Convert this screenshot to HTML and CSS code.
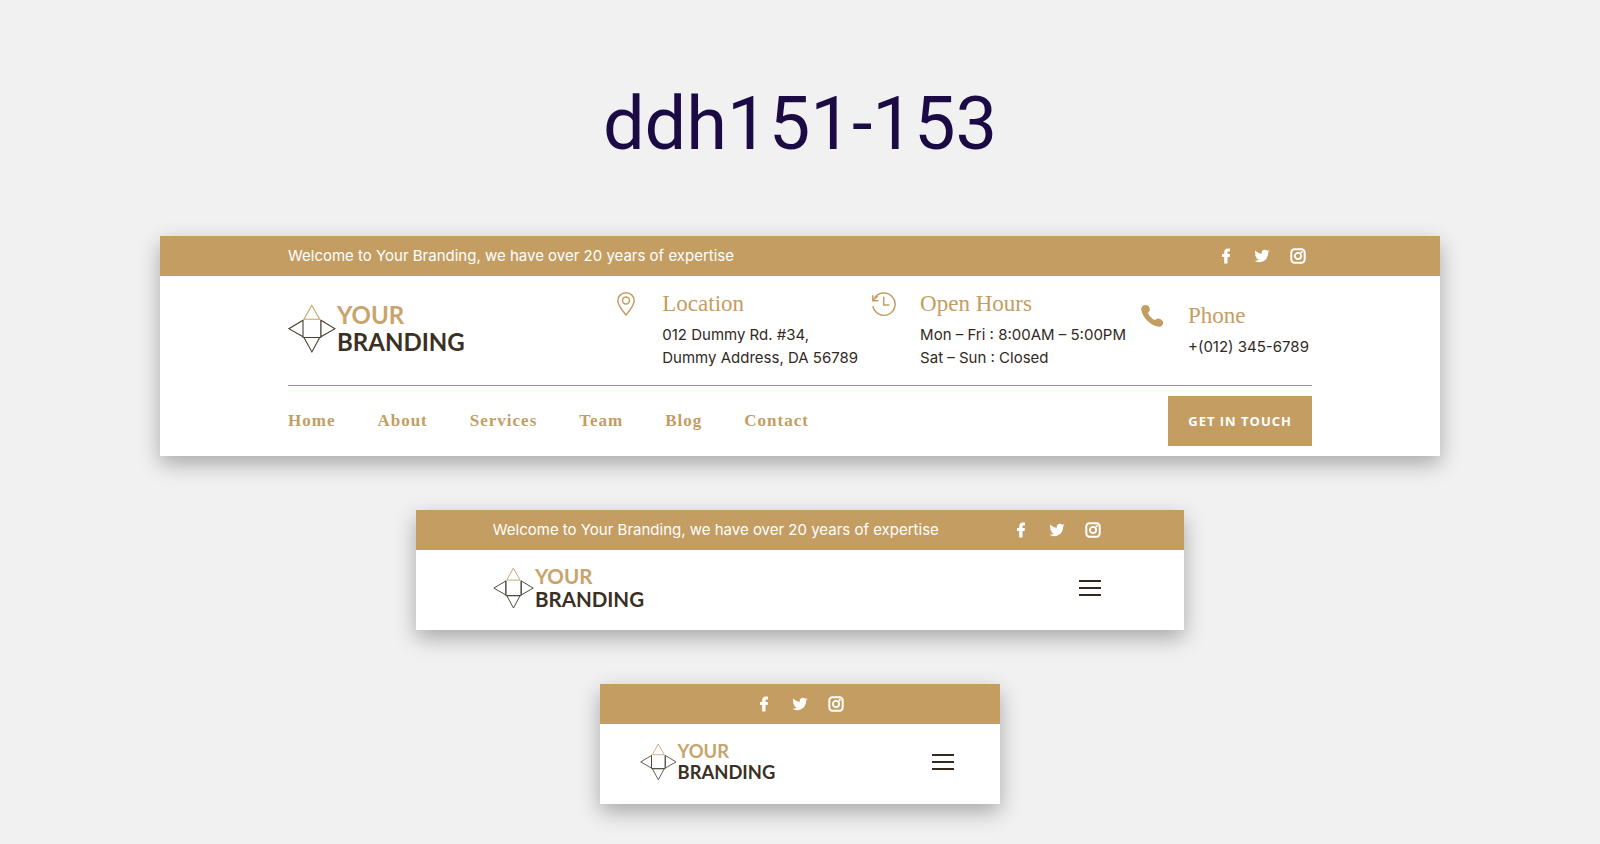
FILE: index.html
```html
<!DOCTYPE html>
<html lang="en">
<head>
<meta charset="utf-8">
<meta name="viewport" content="width=device-width, initial-scale=1">
<title>ddh151-153</title>
<link rel="stylesheet" href="styles.css">
</head>
<body>
<svg class="sprite" aria-hidden="true">
  <symbol id="facebook" viewBox="0 0 16 16"><path d="M6.200 15.500V8.900H4V6.100h2.200V4.300C6.200 2 7.500.5 9.800.5c.9 0 1.700.1 2.200.2v2.700h-1.300c-1 0-1.200.5-1.200 1.200v1.500H12l-.4 2.800H9.500v6.600z"/></symbol>
  <symbol id="twitter" viewBox="0 0 16 16"><path d="M15.600 3.200c-.6.2-1.200.4-1.800.5.7-.4 1.100-1 1.400-1.700-.6.4-1.300.6-2 .8A3.150 3.150 0 0 0 7.800 5.700C5.200 5.500 2.900 4.300 1.300 2.400c-.8 1.500-.4 3.300 1 4.200-.5 0-1-.2-1.400-.4 0 1.600 1.100 2.800 2.500 3.100-.5.1-1 .1-1.400 0 .4 1.300 1.600 2.200 2.900 2.200A6.400 6.400 0 0 1 .3 12.800c1.400.9 3.100 1.400 4.900 1.400 5.800 0 9.100-4.900 8.900-9.400.6-.4 1.100-1 1.500-1.600z"/></symbol>
  <symbol id="instagram" viewBox="0 0 16 16"><rect x="1.300" y="1.300" width="13.400" height="13.400" rx="3.200" fill="none" stroke="currentColor" stroke-width="2"/><circle cx="8" cy="8" r="3.100" fill="none" stroke="currentColor" stroke-width="1.900"/><circle cx="11.700" cy="4.200" r="1.100"/></symbol>
  <symbol id="mark" viewBox="0 0 48 50"><g fill="none" stroke-width="1.100"><path stroke="#4a4034" d="M15 16.300v16.400L.9 24.700zM33 16.300v16.400l14-8zM16 33.500h15.700l-7.800 14.400zM15 16v17.500h17.800V16"/><path stroke="#c8a46c" d="M23.800 1.300 16 15.300h15.700z"/></g></symbol>
</svg>

<main class="page">
  <h1 class="title">ddh151-153</h1>

  <header class="card card-wide">
    <div class="bar">
      <p class="welcome">Welcome to Your Branding, we have over 20 years of expertise</p>
      <nav class="social" aria-label="Social">
        <a href="#" aria-label="Facebook"><svg><use href="#facebook"/></svg></a>
        <a href="#" aria-label="Twitter"><svg><use href="#twitter"/></svg></a>
        <a href="#" aria-label="Instagram"><svg><use href="#instagram"/></svg></a>
      </nav>
    </div>
    <div class="info">
      <a class="logo" href="#"><svg viewBox="0 0 180 50"><use href="#mark" width="48" height="50"/><text class="logo-top" x="49" y="20">YOUR</text><text class="logo-bottom" x="49" y="47">BRANDING</text></svg></a>
      <div class="blurbs">
        <section class="blurb">
          <svg class="blurb-icon" viewBox="0 0 24 24"><path d="M12 .8c-4.800 0-8.200 3.500-8.200 7.900 0 4.300 4.500 9.800 8.200 14.400 3.700-4.600 8.200-10.100 8.200-14.400C20.200 4.300 16.800.8 12 .8z"/><circle cx="12" cy="8.600" r="3.500"/></svg>
          <div><h2>Location</h2><p>012 Dummy Rd. #34,<br>Dummy Address, DA 56789</p></div>
        </section>
        <section class="blurb">
          <svg class="blurb-icon" viewBox="0 0 24 24"><path d="M.9 14.200A11.200 11.200 0 1 0 2.300 6.400M.8 3.200v5.500h5.600M1 8.500l4.700-4.600M11.700 4.800v8.300h5.800"/></svg>
          <div><h2>Open Hours</h2><p>Mon – Fri : 8:00AM – 5:00PM<br>Sat – Sun : Closed</p></div>
        </section>
        <section class="blurb">
          <svg class="blurb-icon blurb-icon-solid" viewBox="0 0 24 24"><path d="M3.300 1.500C4.800.7 6.500.7 7.700 1.600c1.500 1.100 2.500 3.500 2.100 5C9.500 7.800 8 8.100 8.100 9.100c.3 2.200 4.500 6.500 6.700 6.800 1 .1 1.600-1.200 2.700-1.400 1.700-.3 4.400 1 5.300 2.700.8 1.500.2 3.300-.9 4.500-1.200 1.200-3.300 1.300-5.700.6C9.100 20.200 2.800 13.300 1.300 6.300c-.4-2 .4-3.900 2-4.800z"/></svg>
          <div class="phone"><h2>Phone</h2><p>+(012) 345-6789</p></div>
        </section>
      </div>
    </div>
    <div class="menu">
      <nav class="links" aria-label="Main">
        <a href="#">Home</a><a href="#">About</a><a href="#">Services</a><a href="#">Team</a><a href="#">Blog</a><a href="#">Contact</a>
      </nav>
      <a class="cta" href="#">GET IN TOUCH</a>
    </div>
  </header>

  <header class="card card-medium">
    <div class="bar">
      <p class="welcome">Welcome to Your Branding, we have over 20 years of expertise</p>
      <nav class="social" aria-label="Social">
        <a href="#" aria-label="Facebook"><svg><use href="#facebook"/></svg></a>
        <a href="#" aria-label="Twitter"><svg><use href="#twitter"/></svg></a>
        <a href="#" aria-label="Instagram"><svg><use href="#instagram"/></svg></a>
      </nav>
    </div>
    <div class="compact">
      <a class="logo" href="#"><svg viewBox="0 0 180 50"><use href="#mark" width="48" height="50"/><text class="logo-top" x="49" y="20">YOUR</text><text class="logo-bottom" x="49" y="47">BRANDING</text></svg></a>
      <button class="burger" type="button" aria-label="Open menu"><svg viewBox="0 0 22 16"><path d="M0 1h22M0 8h22M0 15h22"/></svg></button>
    </div>
  </header>

  <header class="card card-small">
    <div class="bar">
      <nav class="social" aria-label="Social">
        <a href="#" aria-label="Facebook"><svg><use href="#facebook"/></svg></a>
        <a href="#" aria-label="Twitter"><svg><use href="#twitter"/></svg></a>
        <a href="#" aria-label="Instagram"><svg><use href="#instagram"/></svg></a>
      </nav>
    </div>
    <div class="compact">
      <a class="logo" href="#"><svg viewBox="0 0 180 50"><use href="#mark" width="48" height="50"/><text class="logo-top" x="49" y="20">YOUR</text><text class="logo-bottom" x="49" y="47">BRANDING</text></svg></a>
      <button class="burger" type="button" aria-label="Open menu"><svg viewBox="0 0 22 16"><path d="M0 1h22M0 8h22M0 15h22"/></svg></button>
    </div>
  </header>
</main>
</body>
</html>
```

FILE: styles.css
```css
:root {
  --gold: #c49d63;
  --ink: #33291f;
  --sans: Inter, "Open Sans", sans-serif;
  --serif: "Liberation Serif", serif;
}

* {
  box-sizing: border-box;
}

body {
  margin: 0;
  background: #f1f1f1;
  color: var(--ink);
  font-family: var(--sans);
  font-size: 15px;
}

h1, h2, p {
  margin: 0;
  font-weight: 400;
}

a {
  color: inherit;
  text-decoration: none;
}

svg {
  display: block;
}

.sprite {
  display: none;
}

.page {
  display: flex;
  flex-direction: column;
  align-items: center;
  gap: 54px;
  padding: 82px 0 40px;
}

.title {
  margin-bottom: 16px;
  color: #1b0a43;
  font-family: Roboto, sans-serif;
  font-size: 74px;
  line-height: 84px;
}

.card {
  background: #fff;
  box-shadow: 0 8px 20px rgba(0, 0, 0, 0.3);
}

.card-wide {
  width: 80%;
}

.card-medium {
  width: 48%;
}

.card-small {
  width: 25%;
}

.bar {
  display: flex;
  align-items: center;
  justify-content: space-between;
  min-height: 40px;
  padding: 0 10%;
  background: var(--gold);
  color: #fff;
}

.card-small .bar {
  justify-content: center;
}

.welcome {
  line-height: 20px;
}

.social {
  display: flex;
  gap: 20px;
  padding: 0 6px;
}

.social svg {
  width: 16px;
  height: 16px;
  fill: currentColor;
}

.info {
  display: flex;
  align-items: center;
  justify-content: space-between;
  margin: 0 10%;
  padding: 16px 0;
  border-bottom: 1px solid #ae9068;
}

.info .logo {
  padding-bottom: 4px;
}

.logo svg {
  width: 180px;
  height: auto;
  overflow: visible;
}

.card-medium .logo svg {
  width: 154px;
}

.card-small .logo svg {
  width: 138px;
}

.logo text {
  font-family: Lato, sans-serif;
  font-size: 24px;
  font-weight: 700;
}

.logo-top {
  fill: #c8a46c;
}

.logo-bottom {
  fill: #3a3023;
}

.blurbs {
  display: flex;
  align-items: center;
  gap: 14px;
}

.blurb {
  display: flex;
  gap: 24px;
}

.blurb-icon {
  width: 24px;
  height: 24px;
  fill: none;
  stroke: var(--gold);
  stroke-width: 1.5;
}

.blurb-icon-solid {
  fill: var(--gold);
  stroke: none;
}

.blurb h2 {
  margin-bottom: 7px;
  color: var(--gold);
  font-family: var(--serif);
  font-size: 23px;
  line-height: 24px;
}

.blurb p {
  line-height: 23px;
}

.phone {
  min-width: 124px;
}

.menu {
  display: flex;
  align-items: center;
  justify-content: space-between;
  padding: 10px 10%;
}

.links {
  display: flex;
  gap: 42px;
  color: var(--gold);
  font-family: var(--serif);
  font-size: 17px;
  font-weight: 700;
  letter-spacing: 1px;
}

.cta {
  padding: 0 20px;
  background: var(--gold);
  color: #fff;
  font-family: "Open Sans", sans-serif;
  font-size: 13px;
  font-weight: 700;
  letter-spacing: 1px;
  line-height: 50px;
}

.compact {
  display: flex;
  align-items: center;
  justify-content: space-between;
  min-height: 80px;
  padding: 0 10% 4px;
}

.burger {
  margin: 0;
  padding: 0 6px;
  border: 0;
  background: none;
  color: var(--ink);
}

.burger svg {
  width: 22px;
  height: 16px;
  stroke: currentColor;
  stroke-width: 2;
}
```
